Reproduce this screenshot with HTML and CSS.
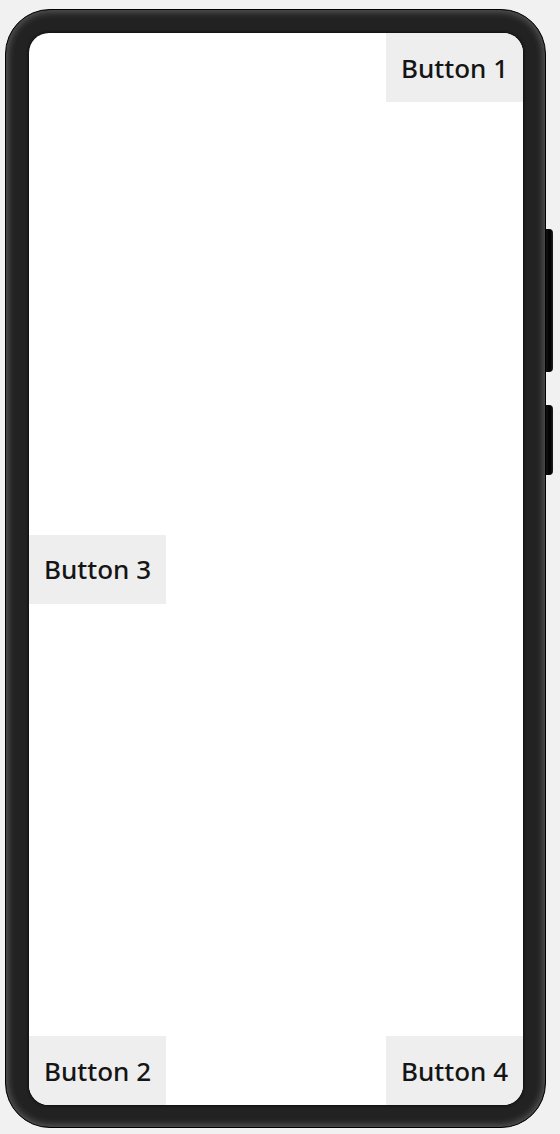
FILE: index.html
```html
<!DOCTYPE html>
<html lang="en">
<head>
    <meta charset="UTF-8">
    <title>Relative Layout Preview</title>
    <link rel="stylesheet" href="styles.css">
</head>
<body>
    <div class="device">
        <div class="frame">
            <div class="screen">
                <div class="row row-top">
                    <button class="btn">Button 1</button>
                </div>
                <div class="row row-middle">
                    <button class="btn">Button 3</button>
                </div>
                <div class="row row-bottom">
                    <button class="btn">Button 2</button>
                    <button class="btn">Button 4</button>
                </div>
            </div>
        </div>
        <div class="keys">
            <div class="key key-power"></div>
            <div class="key key-volume"></div>
        </div>
    </div>
</body>
</html>
```

FILE: styles.css
```css
body {
    margin: 0;
    background-color: #f1f1f1;
    font-family: "Noto Sans", "Open Sans", sans-serif;
}
.device {
    display: flex;
    align-items: flex-start;
    padding: 9px 0 0 5px;
}
.frame {
    width: 541px;
    height: 1119px;
    box-sizing: border-box;
    padding: 23px 22px 22px 23px;
    border: 1px solid #000;
    border-radius: 45px;
    background-color: #222;
    box-shadow: inset 0 0 7px 2px rgba(255, 255, 255, 0.25);
}
.screen {
    height: 100%;
    display: flex;
    flex-direction: column;
    justify-content: space-between;
    background-color: #fff;
    border-radius: 20px;
    overflow: hidden;
    box-shadow: 0 0 3px 1px rgba(0, 0, 0, 0.6);
}
.row {
    display: flex;
}
.row-top {
    justify-content: flex-end;
}
.row-bottom {
    justify-content: space-between;
}
.btn {
    width: 137px;
    height: 69px;
    padding: 0;
    border: none;
    background-color: #eeeeee;
    color: #151515;
    font-family: "Noto Sans", "Open Sans", sans-serif;
    font-size: 26px;
    font-weight: 500;
    text-align: center;
}
.keys {
    display: flex;
    flex-direction: column;
    gap: 33px;
    padding-top: 220px;
}
.key {
    width: 7px;
    background: linear-gradient(to right, #111, #000 60%, #222);
    border-radius: 0 4px 4px 0;
}
.key-power {
    height: 143px;
}
.key-volume {
    height: 70px;
}
```
